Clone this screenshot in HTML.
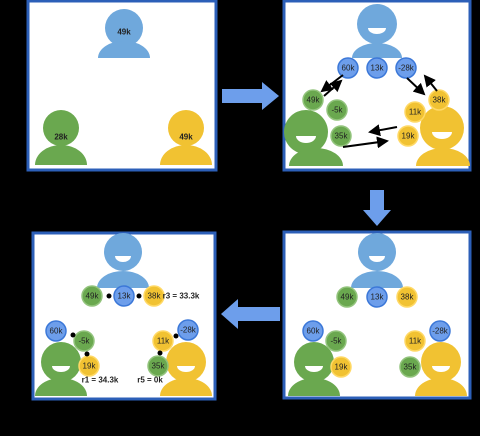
<!DOCTYPE html><html><head><style>html,body{margin:0;padding:0;background:#000;width:480px;height:436px;overflow:hidden}svg{display:block}text{font-family:"Liberation Sans",sans-serif;font-size:8px;text-anchor:middle;dominant-baseline:central;fill:#222}</style></head><body>
<svg width="480" height="436" viewBox="0 0 480 436" xmlns="http://www.w3.org/2000/svg">
<defs>
<marker id="ah" markerWidth="6" markerHeight="6" refX="5" refY="3" orient="auto"><path d="M0,0L6,3L0,6Z" fill="#000"/></marker>
</defs>
<g fill="#fff" stroke="#2c5fb8" stroke-width="3">
<rect x="28" y="1" width="188" height="169"/>
<rect x="284" y="1" width="186" height="169"/>
<rect x="33" y="233" width="182" height="166"/>
<rect x="284" y="232" width="186" height="166"/>
</g>
<g fill="#6d9eeb">
<rect x="222" y="89" width="40" height="14"/><path d="M262,82L279,96L262,110Z"/>
<rect x="370" y="190" width="14" height="22"/><path d="M363,210L391,210L377,226Z"/>
<rect x="238" y="307" width="42" height="14"/><path d="M238,299L221,314L238,329Z"/>
</g>
<g fill="#6fa8dc"><circle cx="124" cy="28" r="19"/><path d="M98,58A26,17 0 0 1 150,58Z"/></g>
<g fill="#6aa84f"><circle cx="61" cy="128" r="18"/><path d="M35,165A26,20 0 0 1 87,165Z"/></g>
<g fill="#f1c232"><circle cx="186" cy="128" r="18"/><path d="M160,165A26,20 0 0 1 212,165Z"/></g>
<g style="font-weight:bold;font-size:7px"><text x="124" y="32" fill="#000">49k</text><text x="61" y="137" fill="#000">28k</text><text x="186" y="137" fill="#000">49k</text></g>
<g fill="#6fa8dc"><circle cx="377" cy="24" r="20"/><path d="M352,58A25,15 0 0 1 402,58Z"/></g>
<g fill="#6aa84f"><circle cx="306" cy="132" r="22"/><path d="M289,166A27,18 0 0 1 343,166Z"/></g>
<g fill="#f1c232"><circle cx="442" cy="128" r="22"/><path d="M416,166A27,18 0 0 1 470,166Z"/></g>
<g fill="#fff"><path d="M368,28A9,6 0 0 0 386,28Z"/><path d="M296,136A10,7 0 0 0 316,136Z"/><path d="M432,132A10,7 0 0 0 452,132Z"/></g>
<g stroke-width="1.5">
<g fill="#6d9eeb" stroke="#3c78d8"><circle cx="348" cy="68" r="10"/><circle cx="377" cy="68" r="10"/><circle cx="406" cy="68" r="10"/></g>
<g fill="#6aa84f" stroke="#93c47d"><circle cx="313" cy="100" r="10"/><circle cx="337" cy="110" r="10"/><circle cx="341" cy="136" r="10"/></g>
<g fill="#f1c232" stroke="#ffd966"><circle cx="439" cy="100" r="10"/><circle cx="415" cy="112" r="10"/><circle cx="408" cy="136" r="10"/></g>
</g>
<text x="348" y="68">60k</text><text x="377" y="68">13k</text><text x="406" y="68">-28k</text>
<text x="313" y="100">49k</text><text x="337" y="110">-5k</text><text x="341" y="136">35k</text>
<text x="439" y="100">38k</text><text x="415" y="112">11k</text><text x="408" y="136">19k</text>
<g stroke="#000" stroke-width="2" marker-end="url(#ah)">
<line x1="343" y1="75" x2="322" y2="91"/><line x1="324" y1="96" x2="341" y2="81"/>
<line x1="407" y1="78" x2="424" y2="94"/><line x1="437" y1="91" x2="425" y2="76"/>
<line x1="397" y1="127" x2="370" y2="132"/><line x1="343" y1="147" x2="387" y2="141"/>
</g>
<g fill="#6fa8dc"><circle cx="377" cy="252" r="19"/><path d="M351,288A26,17 0 0 1 403,288Z"/></g>
<g fill="#6aa84f"><circle cx="314" cy="362" r="20"/><path d="M288,396A26,18 0 0 1 340,396Z"/></g>
<g fill="#f1c232"><circle cx="441" cy="362" r="20"/><path d="M415,396A26,18 0 0 1 467,396Z"/></g>
<g fill="#6fa8dc"><circle cx="123" cy="252" r="19"/><path d="M97,288A26,17 0 0 1 149,288Z"/></g>
<g fill="#6aa84f"><circle cx="61" cy="362" r="20"/><path d="M35,396A26,18 0 0 1 87,396Z"/></g>
<g fill="#f1c232"><circle cx="186" cy="362" r="20"/><path d="M160,396A26,18 0 0 1 212,396Z"/></g>
<g fill="#fff">
<path d="M369,256A8,6 0 0 0 385,256Z"/><path d="M305,366A9,6 0 0 0 323,366Z"/><path d="M432,366A9,6 0 0 0 450,366Z"/>
<path d="M115,256A8,6 0 0 0 131,256Z"/><path d="M52,366A9,6 0 0 0 70,366Z"/><path d="M177,366A9,6 0 0 0 195,366Z"/>
</g>
<g stroke-width="1.5">
<g fill="#6d9eeb" stroke="#3c78d8"><circle cx="377" cy="297" r="10"/><circle cx="313" cy="331" r="10"/><circle cx="440" cy="331" r="10"/>
<circle cx="124" cy="296" r="10"/><circle cx="56" cy="331" r="10"/><circle cx="188" cy="330" r="10"/></g>
<g fill="#6aa84f" stroke="#93c47d"><circle cx="347" cy="297" r="10"/><circle cx="336" cy="341" r="10"/><circle cx="410" cy="367" r="10"/>
<circle cx="92" cy="296" r="10"/><circle cx="84" cy="341" r="10"/><circle cx="158" cy="366" r="10"/></g>
<g fill="#f1c232" stroke="#ffd966"><circle cx="407" cy="297" r="10"/><circle cx="341" cy="367" r="10"/><circle cx="415" cy="341" r="10"/>
<circle cx="154" cy="296" r="10"/><circle cx="89" cy="366" r="10"/><circle cx="163" cy="341" r="10"/></g>
</g>
<text x="347" y="297">49k</text><text x="377" y="297">13k</text><text x="407" y="297">38k</text>
<text x="313" y="331">60k</text><text x="336" y="341">-5k</text><text x="341" y="367">19k</text>
<text x="440" y="331">-28k</text><text x="415" y="341">11k</text><text x="410" y="367">35k</text>
<text x="92" y="296">49k</text><text x="124" y="296">13k</text><text x="154" y="296">38k</text>
<text x="56" y="331">60k</text><text x="84" y="341">-5k</text><text x="89" y="366">19k</text>
<text x="188" y="330">-28k</text><text x="163" y="341">11k</text><text x="158" y="366">35k</text>
<g fill="#000"><circle cx="109" cy="296" r="2.5"/><circle cx="139" cy="296" r="2.5"/><circle cx="73" cy="335" r="2.5"/><circle cx="87" cy="354" r="2.5"/><circle cx="176" cy="336" r="2.5"/><circle cx="160" cy="353" r="2.5"/></g>
<g style="font-weight:bold;font-size:8px">
<text x="181" y="296" fill="#000">r3 = 33.3k</text><text x="100" y="380" fill="#000">r1 = 34.3k</text><text x="150" y="380" fill="#000">r5 = 0k</text>
</g>
</svg>
</body></html>
